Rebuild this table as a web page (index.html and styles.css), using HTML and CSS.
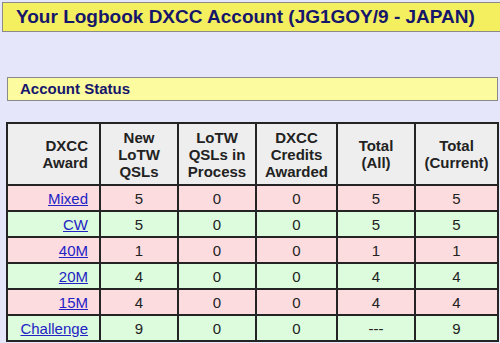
FILE: index.html
```html
<!DOCTYPE html>
<html>
<head>
<meta charset="utf-8">
<link rel="stylesheet" href="styles.css">
</head>
<body>
<div class="title">Your Logbook DXCC Account (JG1GOY/9 - JAPAN)</div>
<div class="section">Account Status</div>
<table class="status">
  <colgroup>
    <col class="c1"><col class="c2"><col class="c3"><col class="c4"><col class="c5"><col class="c6">
  </colgroup>
  <thead>
    <tr>
      <th class="award">DXCC<br>Award</th>
      <th>New<br>LoTW<br>QSLs</th>
      <th>LoTW<br>QSLs in<br>Process</th>
      <th>DXCC<br>Credits<br>Awarded</th>
      <th>Total<br>(All)</th>
      <th>Total<br>(Current)</th>
    </tr>
  </thead>
  <tbody>
    <tr class="pink"><td class="award"><a href="#">Mixed</a></td><td>5</td><td>0</td><td>0</td><td>5</td><td>5</td></tr>
    <tr class="green"><td class="award"><a href="#">CW</a></td><td>5</td><td>0</td><td>0</td><td>5</td><td>5</td></tr>
    <tr class="pink"><td class="award"><a href="#">40M</a></td><td>1</td><td>0</td><td>0</td><td>1</td><td>1</td></tr>
    <tr class="green"><td class="award"><a href="#">20M</a></td><td>4</td><td>0</td><td>0</td><td>4</td><td>4</td></tr>
    <tr class="pink"><td class="award"><a href="#">15M</a></td><td>4</td><td>0</td><td>0</td><td>4</td><td>4</td></tr>
    <tr class="green"><td class="award"><a href="#">Challenge</a></td><td>9</td><td>0</td><td>0</td><td>---</td><td>9</td></tr>
  </tbody>
</table>
</body>
</html>
```

FILE: styles.css
```css
html, body {
  margin: 0;
  padding: 0;
  background: #e6e6fa;
  overflow: hidden;
}
body {
  font-family: "Liberation Sans", Arial, sans-serif;
}
.title {
  margin: 2px -20px 0 2px;
  height: 28px;
  border: 1px solid #8a8a8a;
  background: #f4ef5e;
  color: #16166a;
  font-size: 19px;
  font-weight: bold;
  line-height: 28px;
  padding-left: 13px;
  white-space: nowrap;
}
.section {
  margin: 45px 2px 0 7px;
  height: 22px;
  border: 1px solid #8a8a8a;
  background: #fdfba0;
  color: #16166a;
  font-size: 15px;
  font-weight: bold;
  line-height: 22px;
  padding-left: 12px;
}
.status {
  margin: 21px 0 0 6px;
  border-collapse: collapse;
  table-layout: fixed;
  width: 493px;
  font-size: 15px;
  color: #222;
}
.c1 { width: 93px; }
.c2 { width: 78px; }
.c3 { width: 78px; }
.c4 { width: 81px; }
.c5 { width: 78px; }
.c6 { width: 83px; }
.status th, .status td {
  border: 2px solid #242424;
  text-align: center;
  padding: 0;
}
.status th {
  background: #eeeeee;
  font-weight: bold;
  line-height: 17px;
  height: 60px;
  color: #222;
}
.status td {
  height: 24px;
  line-height: 17px;
}
.status .award {
  text-align: right;
  padding-right: 11px;
}
.pink td { background: #fddce0; }
.green td { background: #ddfcdd; }
.status a {
  color: #2323c4;
  text-decoration: underline;
}
```
